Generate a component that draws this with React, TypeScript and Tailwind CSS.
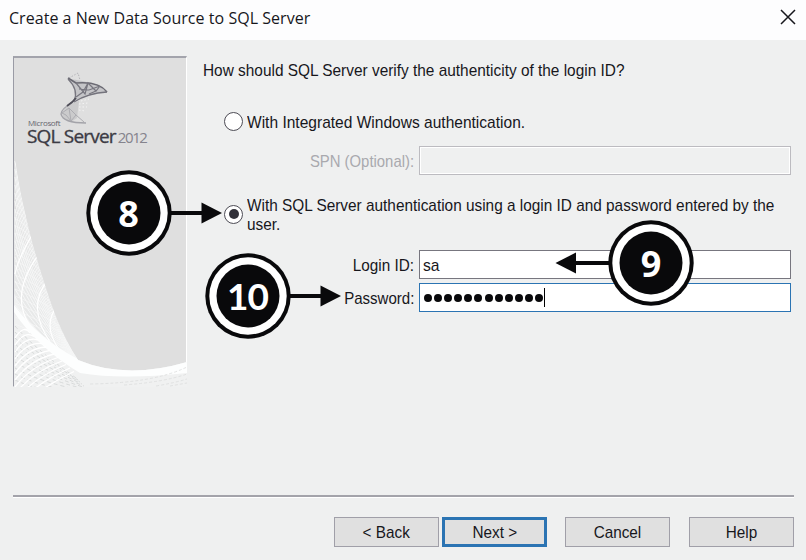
import type { ReactNode } from "react";

const uiFont = "font-['Liberation_Sans',sans-serif] text-[17px] leading-[19px] whitespace-nowrap text-[#17171c]";

// Woven curves in the lower left of the banner
function Mesh() {
  const fan = Array.from({ length: 20 }, (_, i) => i);
  return (
    <svg className="absolute inset-0" width="173" height="329" viewBox="0 0 173 329" fill="none">
      <defs>
        <clipPath id="weave">
          <path d="M0 100 L2 105 C8 150 22 205 42 259 Q52 284 64 302 Q112 322 173 304 V329 H0 Z" />
        </clipPath>
      </defs>
      <g clipPath="url(#weave)">
        <path d="M0 150 Q20 235 64 302 L173 304 V329 H0 Z" fill="#e8e9e9" />
        <path d="M0 235 Q14 275 64 302 L173 302 V329 H0 Z" fill="#f0f1f1" />
        <g stroke="#f6f7f7" strokeWidth="1">
          {fan.map((i) => (
            <path key={"a" + i} d={`M1 ${103 + i * 8} C${8 + i * 0.3} ${155 + i * 6} ${22 + i * 0.2} ${205 + i * 4} ${64 - i * 0.5} ${302}`} />
          ))}
          {fan.map((i) => (
            <path key={"b" + i} d={`M1 ${140 + i * 7} Q${10 + i} ${142 + i * 7.5} ${12 + i * 2.6} ${160 + i * 7.4}`} strokeWidth=".7" />
          ))}
        </g>
        <g stroke="#fff" strokeWidth="1.2">
          <path d="M30 190 Q-12 240 24 278" />
          <path d="M22 170 Q4 200 1 216" />
          <path d="M34 222 Q12 248 36 284" />
          <path d="M44 247 Q28 266 44 290" />
        </g>
        <path d="M0 247 Q24 280 62 300 Q112 318 173 302 V315 Q108 322 66 315 Q24 290 0 254Z" fill="#fdfefe" />
        <g stroke="#d4d6d6" strokeWidth=".9">
          {fan.slice(0, 10).map((i) => (
            <path key={"c" + i} d={`M1 ${268 + i * 6} Q${20 + i} ${290 + i * 5} ${62 + i * 2} ${320 + i * 2}`} strokeDasharray="4 3" />
          ))}
        </g>
        <g stroke="#fff" strokeWidth="1.3">
          {fan.slice(0, 12).map((i) => (
            <path key={"d" + i} d={`M1 ${280 + i * 7} Q${10 + i} ${266 + i * 6} ${16 + i * 4} ${275 + i * 3.5}`} />
          ))}
        </g>
        <path d="M76 326 Q140 325 173 309 M110 327 Q150 324 173 316 M142 328 Q160 325 173 321 M156 328 L173 325" stroke="#dcdddd" strokeWidth=".8" strokeDasharray="3 2" />
      </g>
    </svg>
  );
}

function ServerMark() {
  return (
    <svg className="ml-[45px] block" width="54" height="54" viewBox="0 0 54 54" fill="none">
      <path d="M10 6 L19 1 L21 8" stroke="#b4b4b8" strokeWidth="1" strokeDasharray="1.5 1.5" />
      <path d="M9 7 Q20 18 13 31 Q28 22 48 20 Q40 10 9 7Z" fill="#bcbcc0" fillOpacity=".75" />
      <path d="M3 41 Q5 36 13 31 L20 29 L18 46 L12 50 Q4 48 3 41Z" fill="#cbcbcc" />
      <path d="M9 6 L17 11 Q40 9 48 20" stroke="#6b6a73" strokeWidth="1.6" strokeLinejoin="round" />
      <path d="M48 20 Q29 21 15 30" stroke="#74737c" strokeWidth="1.3" />
      <path d="M15 29 Q2 37 2 42 Q4 51 27 51" stroke="#a3a3a9" strokeWidth="1.3" />
      <path d="M9 7 Q20 18 15 29 M17 11 L26 22 L29 11 L37 19 L41 14 M20 17 L30 18 L41 14 M17 25 L24 20 L29 11 M30 22 L37 19" stroke="#77767f" strokeWidth="1.2" />
      <path d="M3 41 L10 36 L17 43 L12 49 L7 43 Z M10 36 L12 49 M17 43 L25 50" stroke="#adadb2" strokeWidth="1" />
      <path d="M22 29 L30 27 M20 32 L29 31 M20 35 L28 35 M20 38 L26 39" stroke="#f4f4f4" strokeDasharray="1.5 2" />
      <path d="M17 26 Q14 30 8 34" stroke="#504f59" strokeWidth="1.8" />
    </svg>
  );
}

function Banner() {
  return (
    <div className="relative h-[331px] w-[174px] shrink-0 border-t-2 border-r border-b border-l border-t-[#a3a4ac] border-r-white border-b-white border-l-[#9a9ba5] bg-[#dfdfdf]">
      <Mesh />
      <div className="relative pt-[14px]">
        <ServerMark />
        <div className="-mt-[7px] ml-[14px] h-[8px] font-['Open_Sans',sans-serif] text-[8px] leading-[8px] font-medium tracking-[-0.35px] text-[#66656e]">Microsoft</div>
        <div className="-mt-[1px] ml-[13px] flex items-baseline whitespace-nowrap font-['Open_Sans',sans-serif] leading-[20px]">
          <span className="text-[19px] font-medium tracking-[-0.8px] text-[#3c3b44] [-webkit-text-stroke:0.35px_#3c3b44]">SQL Server</span>
          <span className="ml-[2px] text-[15px] tracking-[-1.4px] text-[#85848d]">2012</span>
        </div>
      </div>
    </div>
  );
}

function Radio({ checked }: { checked?: boolean }) {
  return (
    <span className="flex size-[19px] shrink-0 items-center justify-center rounded-full border-[1.5px] border-[#4d4c55] bg-white">
      {checked && <span className="size-[10px] rounded-full bg-[#33323a]" />}
    </span>
  );
}

function Field({ label, children, className, dim }: { label: ReactNode; children?: ReactNode; className: string; dim?: boolean }) {
  return (
    <div className="flex items-center">
      <div className={`${uiFont} flex w-[216px] justify-end pt-[2px] pr-[5px] ${dim ? "text-[#a9a9ae]!" : ""}`}>{label}</div>
      <div className={`flex w-[372px] items-center border ${className}`}>{children}</div>
    </div>
  );
}

function Button({ children, primary }: { children: ReactNode; primary?: boolean }) {
  return (
    <button
      className={`${uiFont} flex h-[30px] w-[105px] items-center justify-center bg-[#e0e0e0] pt-px ${
        primary ? "border-[3px] border-[#2b74b3]" : "border border-[#a09fa8]"
      }`}
    >
      <span className="scale-x-[0.9]">{children}</span>
    </button>
  );
}

function Callout({ n, left, className, fontClass }: { n: string; left?: boolean; className: string; fontClass: string }) {
  return (
    <svg className={`absolute ${className}`} width="142" height="86" viewBox="0 0 142 86">
      <g transform={left ? "translate(142 0) scale(-1 1)" : undefined}>
        <path d="M83 43 H118" stroke="#09090b" strokeWidth="4" />
        <path d={left ? "M118 32.5 L138.500 43 L118 53.500 Z" : "M115.500 32.5 L136 43 L115.500 53.500 Z"} fill="#09090b" />
        <circle cx="43" cy="43" r="42.7" fill="#09090b" />
        <circle cx="43" cy="43" r="38.700" fill="#fff" />
        <circle cx="43" cy="43" r="31.500" fill="#09090b" />
      </g>
      <text x={left ? 99 : 42.5} y="57" textAnchor="middle" className={`fill-white font-bold ${fontClass}`}>
        {n}
      </text>
    </svg>
  );
}

export default function App() {
  return (
    <div className="relative flex h-[560px] w-[806px] flex-col overflow-hidden bg-[#eff0f0]">
      <header className="flex h-[40px] shrink-0 items-start justify-between bg-[#fdfdfe] pt-[7px] pr-[10px] pl-[9px]">
        <h1 className="font-['Open_Sans',sans-serif] text-[16px] leading-[22px] tracking-[0.04px] whitespace-nowrap text-[#17171c]">
          Create a New Data Source to SQL Server
        </h1>
        <svg className="mt-[2px]" width="16" height="16" viewBox="0 0 16 16">
          <path d="M1 1 L15 15 M15 1 L1 15" stroke="#17171c" strokeWidth="1.5" />
        </svg>
      </header>

      <main className="flex h-[455px] shrink-0 gap-[15px] pt-[16px] pl-[13px]">
        <Banner />
        <section className="flex flex-col pl-[1px]">
          <p className={`${uiFont} mt-[5px] w-fit origin-left scale-x-[0.906]`}>
            How should SQL Server verify the authenticity of the login ID?
          </p>
          <div className="mt-[32px] flex h-[19px] items-center gap-[4px] pl-[21px]">
            <Radio />
            <span className={`${uiFont} origin-left scale-x-[0.914] pt-[1px]`}>With Integrated Windows authentication.</span>
          </div>
          <div className="mt-[15px]">
            <Field dim label={<span className="origin-right scale-x-[0.875]">SPN (Optional):</span>} className="h-[29px] border-[#bcbbc0] bg-[#eff0f0] shadow-[inset_0_0_0_1px_#fff]" />
          </div>
          <div className="mt-[20px] flex h-[38px] items-center gap-[4px] pl-[21px]">
            <Radio checked />
            <p className={`${uiFont} w-0 origin-left`}>
              <span className="block w-fit origin-left scale-x-[0.904] pt-[2px]">
                With SQL Server authentication using a login ID and password entered by the
                <br />
                user.
              </span>
            </p>
          </div>
          <div className="mt-[17px] flex flex-col gap-[4px]">
            <Field label={<span className="origin-right scale-x-[0.9]">Login ID:</span>} className="h-[29px] border-[#77767f] bg-white pl-[3px]">
              <span className={`${uiFont} origin-left scale-x-[0.92] pt-[2px]`}>sa</span>
            </Field>
            <Field label={<span className="origin-right scale-x-[0.885]">Password:</span>} className="h-[29px] border-[#2b74b3] bg-white pl-[4px]">
              <span className="flex gap-[2.1px] pt-[1px]">
                {Array.from({ length: 12 }, (_, i) => (
                  <i key={i} className="size-[8px] rounded-full bg-[#09090b]" />
                ))}
              </span>
              <span className="ml-[1px] h-[19px] w-px bg-black" />
            </Field>
          </div>
        </section>
      </main>

      <hr className="mr-[12px] ml-[13px] h-[3px] border-0 border-t-2 border-b border-t-[#a3a3aa] border-b-white" />

      <footer className="mt-[19px] flex pl-[334px]">
        <Button>&lt; Back</Button>
        <div className="ml-[3px]"><Button primary>Next &gt;</Button></div>
        <div className="ml-[18px]"><Button>Cancel</Button></div>
        <div className="ml-[19px]"><Button>Help</Button></div>
      </footer>

      <Callout n="8" className="top-[170px] left-[86px]" fontClass="font-['Open_Sans',sans-serif] text-[36px]" />
      <Callout n="9" left className="top-[220px] left-[552px]" fontClass="font-['Open_Sans',sans-serif] text-[36px]" />
      <Callout n="10" className="top-[253px] left-[205px]" fontClass="font-['Lato',sans-serif] text-[37px] tracking-[-1px]" />
    </div>
  );
}
